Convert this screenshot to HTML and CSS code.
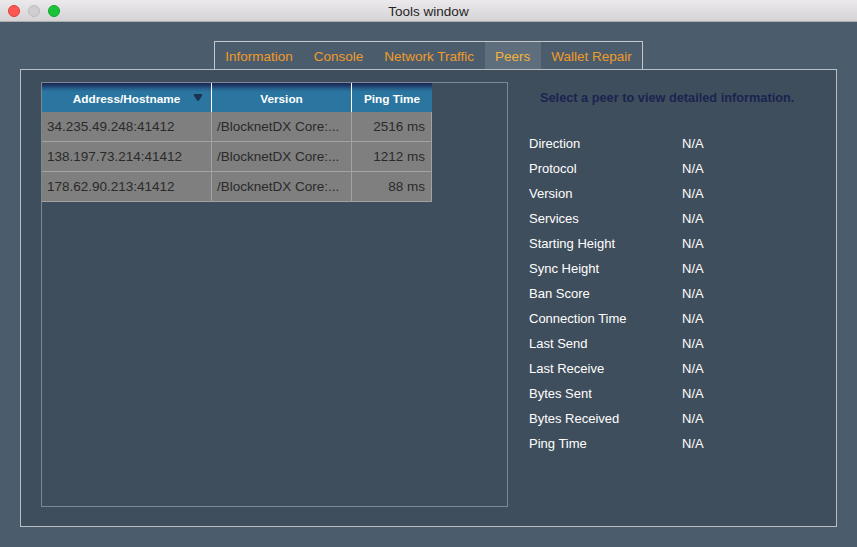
FILE: index.html
```html
<!DOCTYPE html>
<html>
<head>
<meta charset="utf-8">
<link rel="stylesheet" href="styles.css">
</head>
<body>
<div class="window">
  <div class="titlebar">
    <div class="lights">
      <span class="light red"></span>
      <span class="light gray"></span>
      <span class="light green"></span>
    </div>
    <div class="title">Tools window</div>
  </div>
  <div class="main">
    <div class="tabs">
      <div class="tab">Information</div>
      <div class="tab">Console</div>
      <div class="tab">Network Traffic</div>
      <div class="tab active">Peers</div>
      <div class="tab">Wallet Repair</div>
    </div>
    <div class="panel">
      <div class="tablebox">
        <div class="grid">
          <div class="th c1">Address/Hostname<svg class="sort" width="8" height="7" viewBox="0 0 8 7"><path d="M0 0H8V2L4.5 7H3.5L0 2Z" fill="#1c3350"/></svg></div>
          <div class="th c2">Version</div>
          <div class="th c3">Ping Time</div>

          <div class="td c1">34.235.49.248:41412</div>
          <div class="td c2">/BlocknetDX Core:...</div>
          <div class="td c3 num">2516 ms</div>

          <div class="td c1">138.197.73.214:41412</div>
          <div class="td c2">/BlocknetDX Core:...</div>
          <div class="td c3 num">1212 ms</div>

          <div class="td c1">178.62.90.213:41412</div>
          <div class="td c2">/BlocknetDX Core:...</div>
          <div class="td c3 num">88 ms</div>
        </div>
      </div>
      <div class="details">
        <div class="hint">Select a peer to view detailed information.</div>
        <div class="props">
          <div class="k">Direction</div><div class="v">N/A</div>
          <div class="k">Protocol</div><div class="v">N/A</div>
          <div class="k">Version</div><div class="v">N/A</div>
          <div class="k">Services</div><div class="v">N/A</div>
          <div class="k">Starting Height</div><div class="v">N/A</div>
          <div class="k">Sync Height</div><div class="v">N/A</div>
          <div class="k">Ban Score</div><div class="v">N/A</div>
          <div class="k">Connection Time</div><div class="v">N/A</div>
          <div class="k">Last Send</div><div class="v">N/A</div>
          <div class="k">Last Receive</div><div class="v">N/A</div>
          <div class="k">Bytes Sent</div><div class="v">N/A</div>
          <div class="k">Bytes Received</div><div class="v">N/A</div>
          <div class="k">Ping Time</div><div class="v">N/A</div>
        </div>
      </div>
    </div>
  </div>
</div>
</body>
</html>
```

FILE: styles.css
```css
* { box-sizing: border-box; }
html, body {
  margin: 0;
  padding: 0;
  background: #4b5d6c;
}
body {
  font-family: "Liberation Sans", Arial, sans-serif;
  font-size: 13px;
}
.window {
  width: 857px;
  height: 547px;
  background: #4b5d6c;
  display: flex;
  flex-direction: column;
}
.titlebar {
  height: 22px;
  flex: none;
  position: relative;
  background: linear-gradient(#ebe9eb, #d5d3d5);
  border-bottom: 1px solid #aeadae;
  display: flex;
  align-items: center;
  justify-content: center;
}
.lights {
  position: absolute;
  left: 8px;
  top: 5px;
  display: flex;
  gap: 8px;
}
.light {
  width: 12px;
  height: 12px;
  border-radius: 50%;
  display: block;
}
.red { background: #fc5753; border: 1px solid #df3e3a; }
.gray { background: #d0cfd0; border: 1px solid #bcbbbc; }
.green { background: #1bc33b; border: 1px solid #12a52c; }
.title {
  color: #262626;
  font-size: 13.5px;
  padding-top: 1px;
}
.main {
  padding: 19px 20px 0 20px;
  display: flex;
  flex-direction: column;
  align-items: center;
}
.tabs {
  display: flex;
  height: 28px;
  border: 1px solid #c4c8cc;
  border-bottom: none;
  padding: 0;
  position: relative;
  z-index: 1;
}
.tab {
  color: #f09a2a;
  padding: 0 10.5px;
  display: flex;
  align-items: center;
  height: 27px;
  font-size: 13.5px;
  padding-top: 1px;
}
.tab.active {
  background: #5f6e7c;
  color: #f3b33a;
}
.panel {
  align-self: stretch;
  height: 458px;
  border: 1px solid #b9bec4;
  background: #3f4e5c;
  padding: 12px 0 0 20px;
  display: flex;
}
.tablebox {
  width: 467px;
  height: 425px;
  border: 1px solid #7c8893;
  flex: none;
}
.grid {
  display: grid;
  grid-template-columns: 169px 140px 81px;
  width: 391px;
}
.th {
  height: 29px;
  background: linear-gradient(#1a2552 0px, #1f3f6e 3px, #26648f 6px, #2a76a0 9px, #2a76a0 100%);
  color: #fff;
  font-weight: bold;
  font-size: 11.8px;
  display: flex;
  align-items: center;
  justify-content: center;
  padding-top: 2px;
  position: relative;
  border-left: 1px solid #ffffff;
}
.th.c1 { border-left: none; }
.sort {
  position: absolute;
  left: 152px;
  top: 11px;
}
.td {
  height: 30px;
  background: #7f7f7f;
  color: #2a2a2a;
  font-size: 13.5px;
  display: flex;
  align-items: center;
  padding: 0 6px 0 5px;
  border-bottom: 1px solid #a3a3a3;
  border-left: 1px solid #a3a3a3;
  white-space: nowrap;
  overflow: hidden;
}
.td.c1 { border-left: none; }
.td.c3 { border-right: 1px solid #a3a3a3; }
.td.num { justify-content: flex-end; }
.details {
  flex: 1;
  padding: 8px 0 0 21px;
}
.hint {
  color: #1b2350;
  font-weight: bold;
  font-size: 12.75px;
  padding-left: 11px;
  height: 17px;
}
.props {
  margin-top: 29px;
  display: grid;
  grid-template-columns: 153px auto;
  grid-auto-rows: 25px;
  color: #ffffff;
  font-size: 13px;
}
```
